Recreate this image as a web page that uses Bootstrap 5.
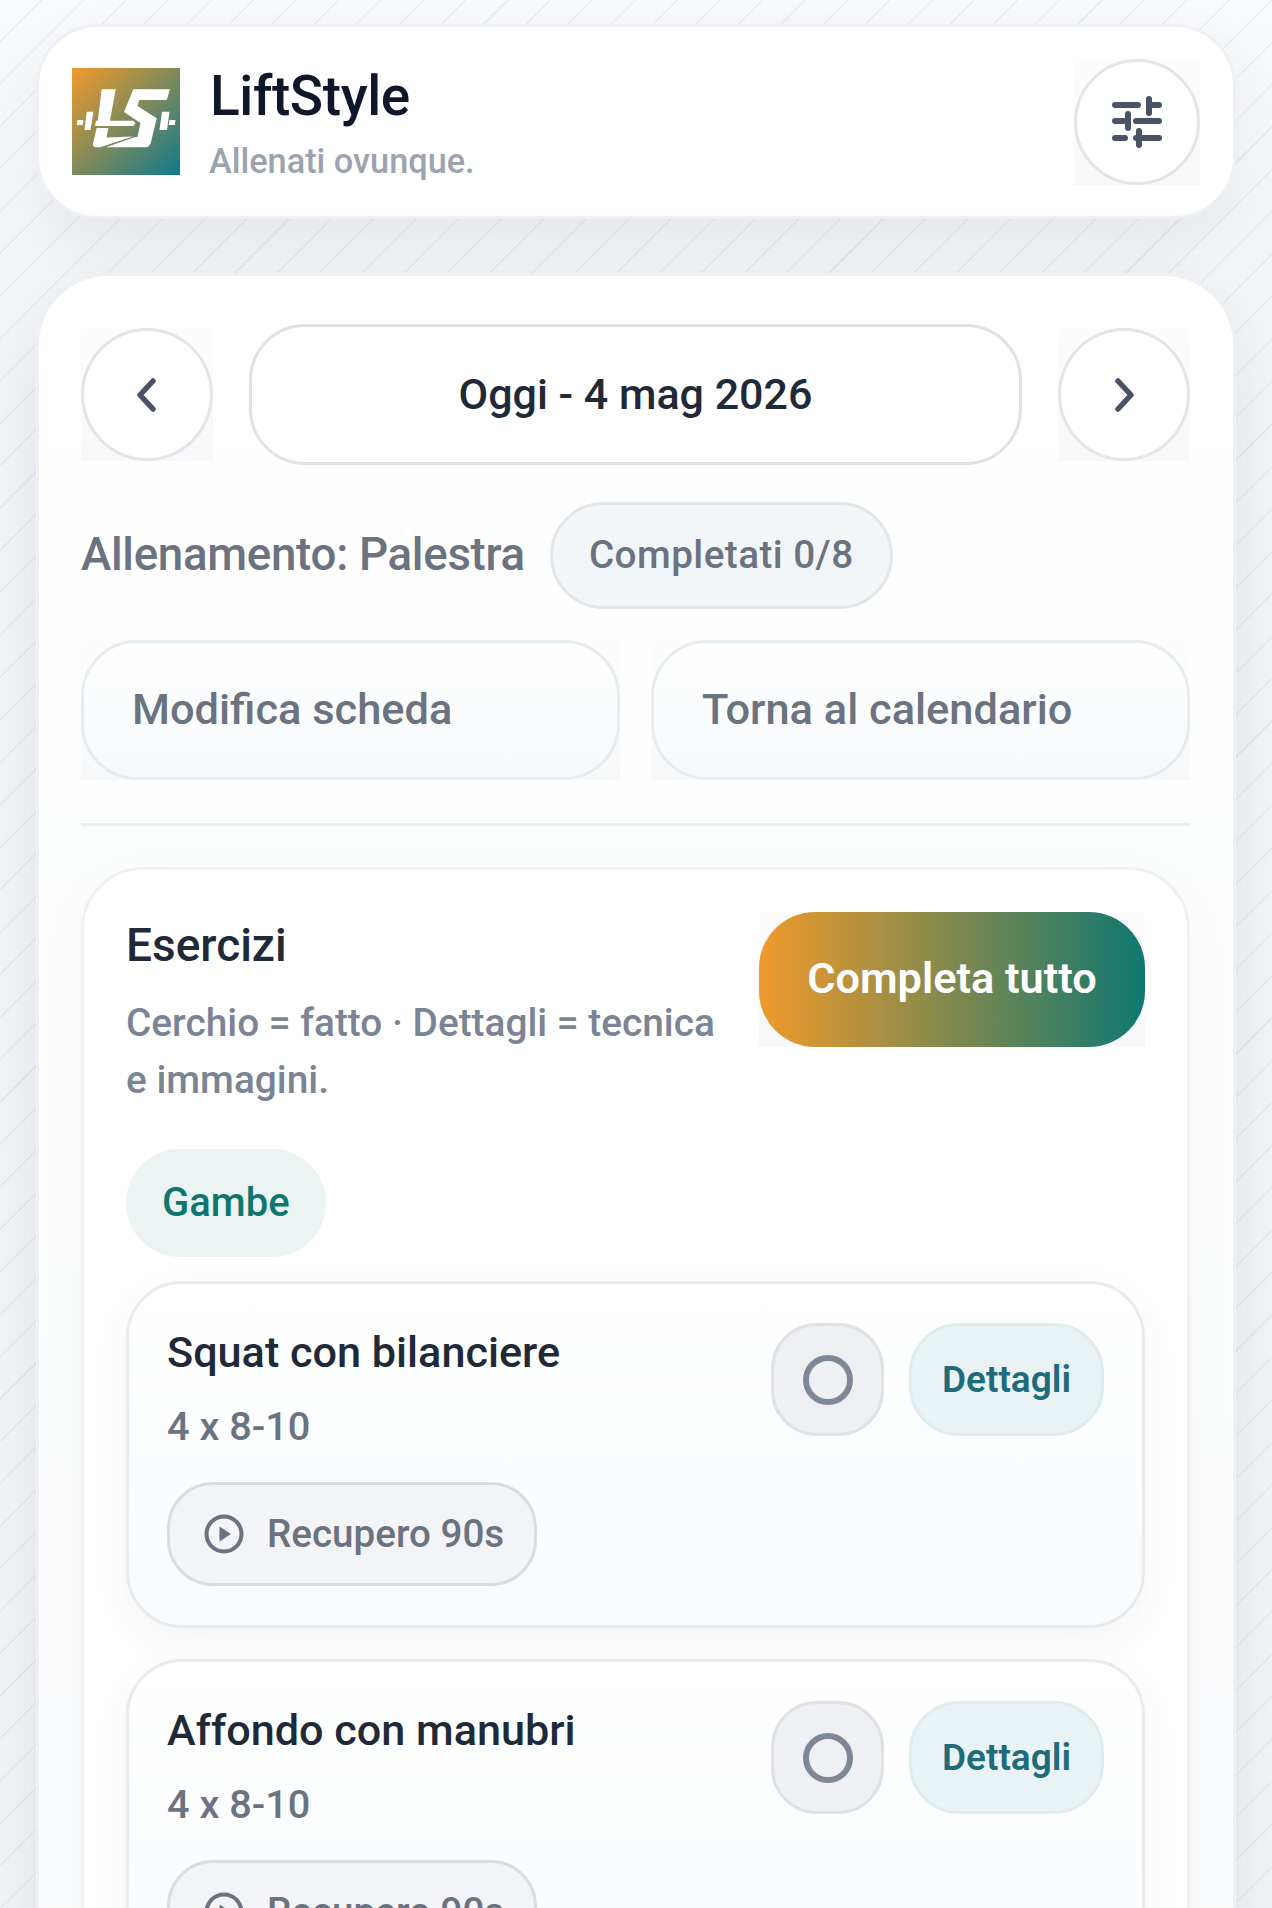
<!DOCTYPE html>
<html lang="it">
<head>
  <meta charset="UTF-8" />
  <meta name="viewport" content="width=device-width, initial-scale=1.0"/>
  <title>LiftStyle</title>
  <link href="https://cdn.jsdelivr.net/npm/bootstrap@5.3.0/dist/css/bootstrap.min.css" rel="stylesheet">
  <style>
    html, body { height: 1908px; overflow: hidden; }
    body {
      font-family: Roboto, "Liberation Sans", sans-serif;
      padding: 24px 36px 0;
      color: #1f2937;
      background-color: #f1f3f6;
      background-image:
        repeating-linear-gradient(135deg, transparent 0 28.5px, rgba(170,195,205,.2) 28.5px 30px),
        linear-gradient(180deg, #f9fafc 0, #f2f4f7 260px, #f1f3f6 100%);
    }
    .app-header {
      background: #fff;
      border: 3px solid #eff0f3;
      border-radius: 62px;
      height: 195px;
      padding: 0 33px;
      margin-bottom: 54px;
      box-shadow: 0 24px 60px rgba(60,72,92,.07);
    }
    .app-logo { width: 108px; height: 107px; display: block; margin-right: 30px; }
    .app-title { font-size: 55px; line-height: 58px; font-weight: 500; color: #0f172a; margin: 4px 0 16px; letter-spacing: -.4px; }
    .app-sub { font-size: 34.3px; line-height: 40px; font-weight: 500; color: #9ca3af; margin: 0 0 0 -1px; }
    .tile { background: linear-gradient(180deg, #fdfdfe 0, #f7f8f9 100%); flex-shrink: 0; display: block; }
    .round-btn {
      width: 100%; height: 100%; padding: 0;
      background: #fff; border: 3px solid #e3e5e8;
      display: flex; align-items: center; justify-content: center;
    }
    .settings-tile { width: 126px; height: 126px; }
    .nav-tile { width: 132px; height: 133px; }
    .main-panel {
      background: linear-gradient(180deg, #fff 0, #fbfcfd 100%);
      border: 3px solid #eff0f3;
      border-radius: 72px;
      padding: 48px 43px 0 42px;
      min-height: 1700px;
      box-shadow: 0 24px 60px rgba(60,72,92,.09);
    }
    .date-row { gap: 36px; height: 141px; margin-bottom: 37px; }
    .date-pill {
      height: 141px; border: 3px solid #e0e2e5; border-radius: 56px; background: #fff;
      font-size: 43px; font-weight: 500; color: #1f2937;
    }
    .day-row { gap: 25px; height: 107px; margin-bottom: 31px; }
    .day-title { font-size: 45.7px; font-weight: 500; color: #6b7280; margin: 0; letter-spacing: -.3px; }
    .done-pill {
      height: 107px; padding: 0 36px; border: 3px solid #e1e6e9; border-radius: 54px; background: #f3f6f8;
      font-size: 38.7px; font-weight: 500; color: #6b7280; display: flex; align-items: center; letter-spacing: .45px;
    }
    .act-row { --bs-gutter-x: 31px; --bs-gutter-y: 0; margin-bottom: 43px; }
    .act-tile { height: 140px; background: linear-gradient(180deg, #fdfdfe 0, #f7f8f9 100%); }
    .act-btn {
      width: 100%; height: 100%; text-align: left; padding: 0 48px;
      background: linear-gradient(180deg, #fff 0, #f6f9fb 100%);
      border: 3px solid #e6edf0; border-radius: 56px;
      font-size: 43.4px; font-weight: 500; color: #6b7280;
    }
    .sep { height: 3px; background: #eceff2; opacity: 1; border: 0; margin: 0 0 41px; }
    .ex-panel {
      background: #fff; border: 3px solid #eef0f3; border-radius: 62px;
      padding: 42px 42px 0 42px; min-height: 1100px;
      box-shadow: 0 10px 50px rgba(60,72,92,.05);
    }
    .ex-head { margin-bottom: 41px; }
    .ex-title { font-size: 46px; line-height: 60px; font-weight: 500; color: #1f2937; margin: 3px 0 19px; }
    .ex-desc { font-size: 38.8px; line-height: 57px; font-weight: 500; color: #7b8494; margin: 0; width: 600px; }
    .all-tile { width: 386px; height: 135px; background: linear-gradient(180deg, #fdfdfe 0, #f7f8f9 100%); }
    .all-btn {
      width: 100%; height: 100%; padding: 0; border: 0; border-radius: 56px; color: #fff;
      background: linear-gradient(90deg, #f09a2c 0, #0f7870 100%);
      font-size: 43.3px; font-weight: 600;
    }
    .group-pill {
      display: inline-flex; align-items: center; height: 108px; padding: 0 36px; margin-bottom: 24px;
      background: #ecf4f3; border-radius: 54px; color: #0f766e; font-size: 40px; font-weight: 500;
    }
    .ex-item {
      background: linear-gradient(180deg, #fff 0, #f8fbfd 100%);
      border: 3px solid #e9ebee; border-radius: 56px;
      padding: 39px 38px;
      margin-bottom: 31px;
      box-shadow: 0 12px 36px rgba(60,72,92,.06);
    }
    .item-name { font-size: 43.2px; line-height: 56px; font-weight: 500; color: #1f2937; margin: 2px 0 20px; }
    .item-reps { font-size: 39.7px; line-height: 52px; font-weight: 500; color: #6b7280; margin: 0 0 29px; }
    .rest-pill {
      display: inline-flex; align-items: center; gap: 23px; height: 104px; padding: 0 30px 0 34px;
      background: #f2f4f7; border: 3px solid #d9dde2; border-radius: 46px;
      font-size: 38.6px; font-weight: 500; color: #6b7280;
    }
    .item-btns { gap: 25px; }
    .check-btn {
      width: 113px; height: 113px; padding: 0; background: #eff0f3; border: 3px solid #dfe1e5; border-radius: 46px;
      display: flex; align-items: center; justify-content: center;
    }
    .info-btn {
      width: 195px; height: 113px; padding: 0; background: #e9f3f5; border: 3px solid #dfecee; border-radius: 50px;
      color: #1f6b7b; font-size: 37px; font-weight: 600;
    }
  </style>
</head>
<body>
  <header class="app-header d-flex align-items-center">
    <svg class="app-logo" viewBox="0 0 108 107" aria-label="LiftStyle logo">
      <defs>
        <linearGradient id="logoGrad" x1="0" y1="0" x2="1" y2="1">
          <stop offset="0" stop-color="#f29a2a"/>
          <stop offset="1" stop-color="#0f7a8c"/>
        </linearGradient>
      </defs>
      <rect width="108" height="107" fill="url(#logoGrad)"/>
      <g fill="#fff">
        <polygon points="29.7,21.3 43.7,21.3 38,52.7 61.3,52.7 63.5,55.3 61.3,58 23,58 24,52.7 25.7,52.7"/>
        <path d="M24.7,60 L36.5,60 L34.5,69.5 L61,68.5 L28,79.3 H24 Q20.5,79.3 21,75.5 Z"/>
        <path d="M61.3,21.3 H98 L94.7,32 H67.3 L65.5,38 L84.7,50.3 L79,74 Q78,79.3 73,79.3 H34 L63,69 H65.5 L68.5,55 L52,44 Z"/>
        <polygon points="14.7,43.7 21.5,43.7 18.5,62 12.5,62"/>
        <polygon points="90,43.7 97.5,43.7 95,62 87.5,62"/>
        <polygon points="5.5,52 11.5,52 10.8,57 4.7,57"/>
        <polygon points="97.5,52 103.5,52 102.8,57 96.7,57"/>
      </g>
    </svg>
    <div class="flex-grow-1">
      <h1 class="app-title">LiftStyle</h1>
      <p class="app-sub">Allenati ovunque.</p>
    </div>
    <span class="tile settings-tile">
      <button class="btn round-btn rounded-circle" type="button" aria-label="Impostazioni">
        <svg width="50" height="52" viewBox="0 0 50 52" fill="none" stroke="#4a5266" stroke-width="6" stroke-linecap="round">
          <path d="M3 9H26M37 9H47M37 3V17M3 25H13M24 25H47M16 18V32M3 42H13M24 42H47M27 35V49"/>
        </svg>
      </button>
    </span>
  </header>

  <main class="main-panel">
    <div class="date-row d-flex align-items-center">
      <span class="tile nav-tile">
        <button class="btn round-btn rounded-circle" type="button" aria-label="Giorno precedente">
          <svg width="20" height="34" viewBox="0 0 20 34" fill="none" stroke="#4a5266" stroke-width="5.5" stroke-linecap="round" stroke-linejoin="round"><path d="M16 3L3 17L16 31"/></svg>
        </button>
      </span>
      <div class="date-pill flex-grow-1 d-flex align-items-center justify-content-center">Oggi - 4 mag 2026</div>
      <span class="tile nav-tile">
        <button class="btn round-btn rounded-circle" type="button" aria-label="Giorno successivo">
          <svg width="20" height="34" viewBox="0 0 20 34" fill="none" stroke="#4a5266" stroke-width="5.5" stroke-linecap="round" stroke-linejoin="round"><path d="M4 3L17 17L4 31"/></svg>
        </button>
      </span>
    </div>

    <div class="day-row d-flex align-items-center">
      <h2 class="day-title">Allenamento: Palestra</h2>
      <span class="done-pill">Completati 0/8</span>
    </div>

    <div class="row act-row">
      <div class="col-6"><div class="act-tile"><button class="btn act-btn" type="button">Modifica scheda</button></div></div>
      <div class="col-6"><div class="act-tile"><button class="btn act-btn" type="button">Torna al calendario</button></div></div>
    </div>

    <hr class="sep">

    <section class="ex-panel">
      <div class="ex-head d-flex justify-content-between align-items-start">
        <div>
          <h3 class="ex-title">Esercizi</h3>
          <p class="ex-desc">Cerchio = fatto · Dettagli = tecnica e immagini.</p>
        </div>
        <div class="tile all-tile"><button class="btn all-btn" type="button">Completa tutto</button></div>
      </div>

      <span class="group-pill">Gambe</span>

      <article class="ex-item d-flex justify-content-between align-items-start">
        <div>
          <h4 class="item-name">Squat con bilanciere</h4>
          <p class="item-reps">4 x 8-10</p>
          <span class="rest-pill">
            <svg width="40" height="40" viewBox="0 0 40 40"><circle cx="20" cy="20" r="17.5" fill="none" stroke="#6b7280" stroke-width="4"/><path d="M15.5 12.5L27 20L15.5 27.5Z" fill="#6b7280"/></svg>
            Recupero 90s
          </span>
        </div>
        <div class="item-btns d-flex">
          <button class="btn check-btn" type="button" aria-label="Segna come fatto"><svg width="50" height="50" viewBox="0 0 50 50"><circle cx="25" cy="25" r="22" fill="none" stroke="#7f8896" stroke-width="6"/></svg></button>
          <button class="btn info-btn" type="button">Dettagli</button>
        </div>
      </article>

      <article class="ex-item d-flex justify-content-between align-items-start">
        <div>
          <h4 class="item-name">Affondo con manubri</h4>
          <p class="item-reps">4 x 8-10</p>
          <span class="rest-pill">
            <svg width="40" height="40" viewBox="0 0 40 40"><circle cx="20" cy="20" r="17.5" fill="none" stroke="#6b7280" stroke-width="4"/><path d="M15.5 12.5L27 20L15.5 27.5Z" fill="#6b7280"/></svg>
            Recupero 90s
          </span>
        </div>
        <div class="item-btns d-flex">
          <button class="btn check-btn" type="button" aria-label="Segna come fatto"><svg width="50" height="50" viewBox="0 0 50 50"><circle cx="25" cy="25" r="22" fill="none" stroke="#7f8896" stroke-width="6"/></svg></button>
          <button class="btn info-btn" type="button">Dettagli</button>
        </div>
      </article>
    </section>
  </main>

  <script src="https://cdn.jsdelivr.net/npm/bootstrap@5.3.0/dist/js/bootstrap.bundle.min.js"></script>
</body>
</html>
